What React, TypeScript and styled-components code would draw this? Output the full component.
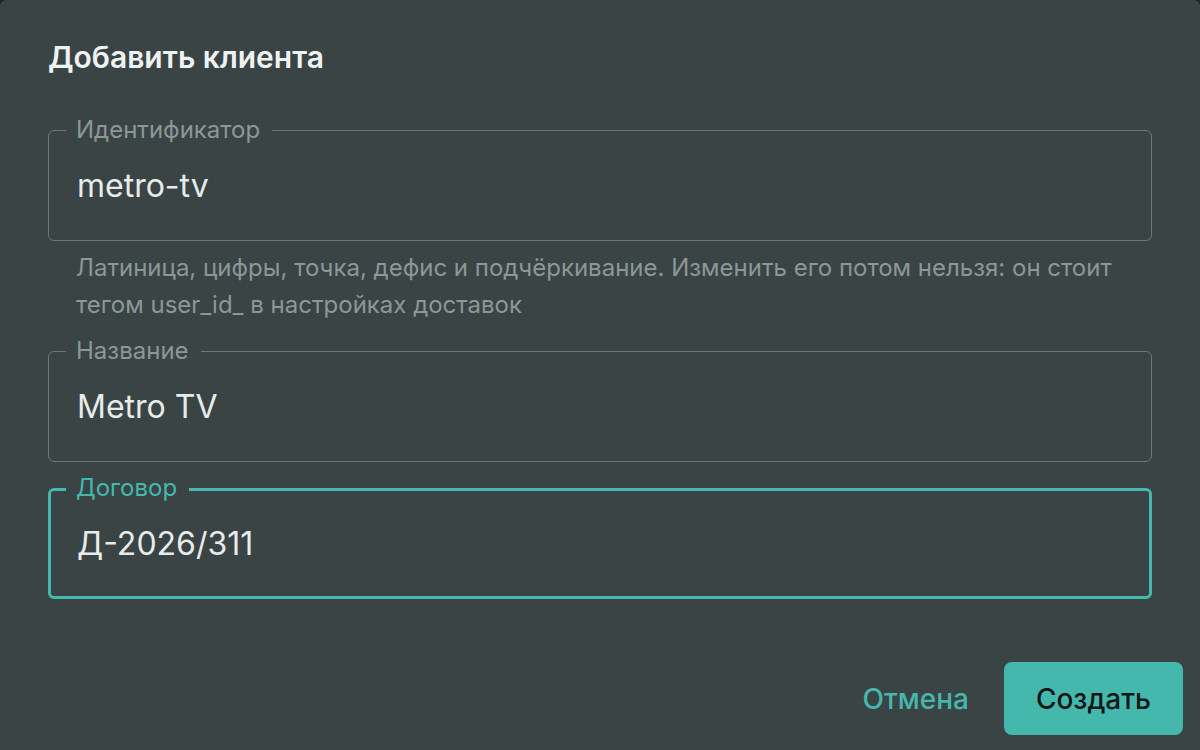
import React from "react";
import styled, { createGlobalStyle, css } from "styled-components";

const GlobalStyle = createGlobalStyle`
    html, body {
        margin: 0;
        padding: 0;
        height: 100%;
        background: #1c2222;
    }
    #root {
        height: 100%;
    }
`

const StyledDialog = styled.div`
    box-sizing: border-box;
    height: 100vh;
    background-color: #3a4445;
    border-radius: 6px 6px 0 0;
    display: flex;
    flex-direction: column;
    font-family: Inter, "Noto Sans", sans-serif;
    color: #e7ecea;
`

const Title = styled.h2`
    margin: 0;
    padding: 39px 48px 0;
    font-size: 30px;
    line-height: 36px;
    font-weight: 600;
    color: #eef2f1;
`

const Content = styled.div`
    padding: 55px 48px 0;
    display: flex;
    flex-direction: column;
    gap: 26px;
`

const FieldGroup = styled.div`
    display: flex;
    flex-direction: column;
`

const FieldBox = styled.div<{ $focused?: boolean }>`
    position: relative;
    box-sizing: border-box;
    height: 111px;
    border: 1px solid #6c7676;
    border-radius: 6px;
    display: flex;
    align-items: center;
    padding: 0 28px;
    ${(p) => p.$focused && css`
        border: 3px solid #45b8ad;
        padding: 0 26px;
    `}
`

const FieldLabel = styled.label<{ $focused?: boolean }>`
    position: absolute;
    top: -15px;
    left: 17px;
    padding: 0 12px 0 10px;
    background-color: #3a4445;
    font-size: 24px;
    line-height: 28px;
    color: #8b9896;
    ${(p) => p.$focused && css`
        left: 15px;
        top: -17px;
        color: #45b8ad;
    `}
`

const Input = styled.input`
    flex: 1;
    border: none;
    outline: none;
    background: transparent;
    padding: 0;
    margin: 0;
    font-family: inherit;
    font-size: 32px;
    color: #e7ecea;
    caret-color: transparent;
`

const Helper = styled.p`
    margin: 8px 0 2px;
    padding-left: 28px;
    font-size: 24px;
    line-height: 37px;
    color: #8b9896;
`

const Actions = styled.div`
    margin-top: auto;
    padding: 0 17px 15px;
    display: flex;
    justify-content: flex-end;
    align-items: center;
    gap: 19px;
`

const Button = styled.button<{ $primary?: boolean }>`
    height: 73px;
    border: none;
    border-radius: 8px;
    font-family: inherit;
    font-size: 28px;
    font-weight: 500;
    cursor: pointer;
    padding: 0 16px;
    background: transparent;
    color: #45b8ad;
    ${(p) => p.$primary && css`
        padding: 0 32px;
        background-color: #45b8ad;
        color: #0e1716;
    `}
`

type FieldProps = { label: string; value: string; focused?: boolean; helper?: string }

const Field = ({ label, value, focused, helper }: FieldProps) => (
    <FieldGroup>
        <FieldBox $focused={focused}>
            <FieldLabel $focused={focused}>{label}</FieldLabel>
            <Input defaultValue={value} />
        </FieldBox>
        {helper && <Helper>{helper}</Helper>}
    </FieldGroup>
)

const App = () => {
    return <>
        <GlobalStyle />
        <StyledDialog>
            <Title>Добавить клиента</Title>
            <Content>
                <Field
                    label="Идентификатор"
                    value="metro-tv"
                    helper="Латиница, цифры, точка, дефис и подчёркивание. Изменить его потом нельзя: он стоит тегом user_id_ в настройках доставок"
                />
                <Field label="Название" value="Metro TV" />
                <Field label="Договор" value="Д-2026/311" focused />
            </Content>
            <Actions>
                <Button>Отмена</Button>
                <Button $primary>Создать</Button>
            </Actions>
        </StyledDialog>
    </>
}

export default App
